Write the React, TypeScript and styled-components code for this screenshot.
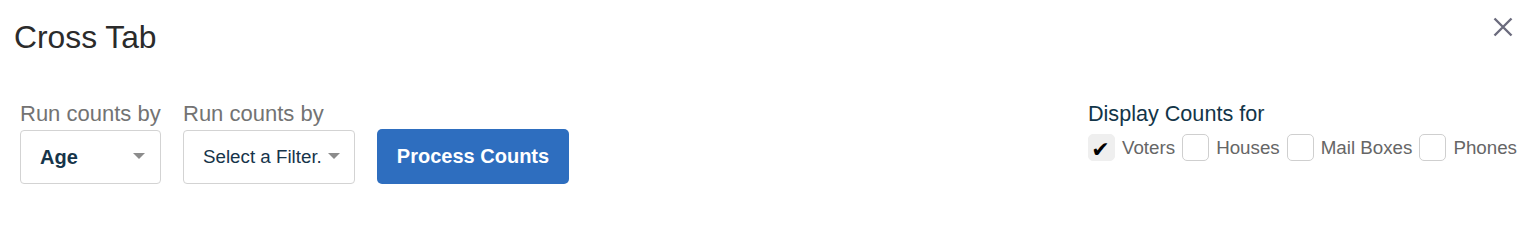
import React from "react";
import styled, { createGlobalStyle } from "styled-components";

const Global = createGlobalStyle`
  html, body { margin: 0; padding: 0; background: #fff; }
  body { font-family: "Liberation Sans", Arial, Helvetica, sans-serif; }
  * { box-sizing: border-box; }
`;

const Modal = styled.div`
  width: 1536px;
  height: 244px;
  background: #fff;
`;

const Header = styled.div`
  display: flex;
  justify-content: space-between;
  align-items: flex-start;
  padding: 17px 23px 0 14px;
`;

const Title = styled.h2`
  margin: 2px 0 0 0;
  font-size: 31.8px;
  line-height: 36px;
  font-weight: 400;
  color: #2b2b2b;
`;

const CloseButton = styled.button`
  width: 20px;
  height: 20px;
  padding: 0;
  border: none;
  background: transparent;
  display: flex;
  cursor: pointer;
`;

const Body = styled.div`
  display: flex;
  justify-content: space-between;
  align-items: flex-start;
  padding: 0 19px 0 20px;
  margin-top: 46px;
`;

const Controls = styled.div`
  display: flex;
  align-items: flex-end;
  gap: 22px;
`;

const Field = styled.div`
  display: flex;
  flex-direction: column;
`;

const FieldLabel = styled.label`
  font-size: 22px;
  line-height: 26px;
  color: #737373;
  margin-bottom: 3px;
  white-space: nowrap;
`;

const SelectBox = styled.div<{ $width: number; $bold?: boolean }>`
  width: ${(p) => p.$width}px;
  height: 54px;
  border: 1px solid #d3d3d3;
  border-radius: 4px;
  display: flex;
  align-items: center;
  justify-content: space-between;
  gap: 6px;
  padding: 0 15px 0 19px;
  color: #16344a;
  font-size: ${(p) => (p.$bold ? "20px" : "18.75px")};
  font-weight: ${(p) => (p.$bold ? 700 : 400)};
  white-space: nowrap;
`;

const Caret = styled.span`
  width: 0;
  height: 0;
  border-left: 6px solid transparent;
  border-right: 6px solid transparent;
  border-top: 6px solid #8c8c8c;
  flex: none;
  margin-top: -2px;
`;

const PrimaryButton = styled.button`
  height: 55px;
  width: 192px;
  border: none;
  border-radius: 5px;
  background: #2e6ebf;
  color: #fff;
  font-family: inherit;
  font-size: 20px;
  font-weight: 700;
  padding: 0;
  white-space: nowrap;
  cursor: pointer;
`;

const Display = styled.div`
  display: flex;
  flex-direction: column;
  margin-top: 1px;
`;

const DisplayLabel = styled.div`
  font-size: 21.6px;
  line-height: 24px;
  color: #123548;
  margin-bottom: 8px;
`;

const CheckRow = styled.div`
  display: flex;
  align-items: center;
  gap: 7px;
`;

const Box = styled.span<{ $checked?: boolean }>`
  width: 27px;
  height: 27px;
  border-radius: 5px;
  border: 1px solid ${(p) => (p.$checked ? "#efefef" : "#cfcfcf")};
  background: ${(p) => (p.$checked ? "#efefef" : "#fff")};
  display: flex;
  align-items: center;
  justify-content: center;
  font-family: "DejaVu Sans", sans-serif;
  font-size: 22px;
  line-height: 1;
  color: #000;
  padding-top: 4px;
  padding-right: 2px;
`;

const CheckLabel = styled.span`
  font-size: 18.75px;
  line-height: 27px;
  color: #666;
  white-space: nowrap;
`;

const options = [
  { label: "Voters", checked: true },
  { label: "Houses", checked: false },
  { label: "Mail Boxes", checked: false },
  { label: "Phones", checked: false },
];

export default function App() {
  return (
    <>
      <Global />
      <Modal>
        <Header>
          <Title>Cross Tab</Title>
          <CloseButton aria-label="Close">
            <svg width="20" height="20" viewBox="0 0 20 20">
              <path
                d="M1.5 1.5 L18.5 18.5 M18.5 1.5 L1.5 18.5"
                stroke="#6b6b7d"
                strokeWidth="2.4"
                strokeLinecap="butt"
                fill="none"
              />
            </svg>
          </CloseButton>
        </Header>
        <Body>
          <Controls>
            <Field>
              <FieldLabel>Run counts by</FieldLabel>
              <SelectBox $width={141} $bold>
                <span>Age</span>
                <Caret />
              </SelectBox>
            </Field>
            <Field>
              <FieldLabel>Run counts by</FieldLabel>
              <SelectBox $width={172}>
                <span>Select a Filter.</span>
                <Caret />
              </SelectBox>
            </Field>
            <PrimaryButton>Process Counts</PrimaryButton>
          </Controls>
          <Display>
            <DisplayLabel>Display Counts for</DisplayLabel>
            <CheckRow>
              {options.map((o) => (
                <React.Fragment key={o.label}>
                  <Box $checked={o.checked}>{o.checked ? "✔" : ""}</Box>
                  <CheckLabel>{o.label}</CheckLabel>
                </React.Fragment>
              ))}
            </CheckRow>
          </Display>
        </Body>
      </Modal>
    </>
  );
}
